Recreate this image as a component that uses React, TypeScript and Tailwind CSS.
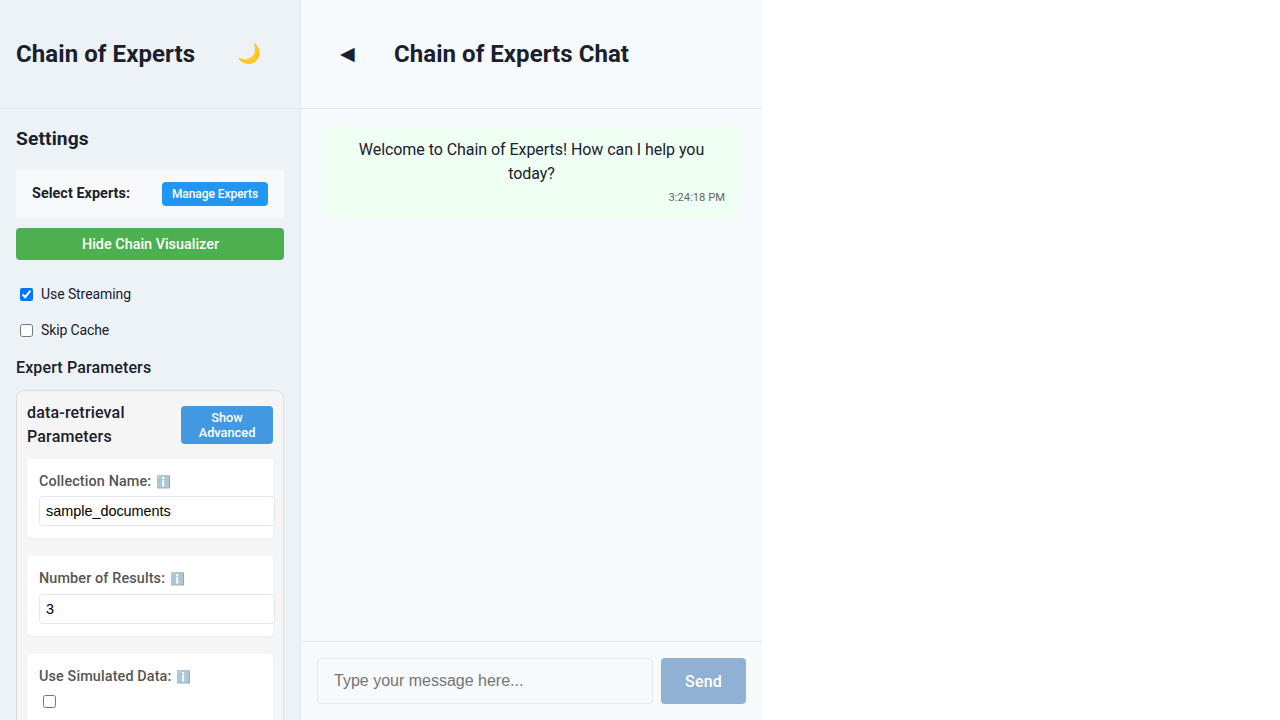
import { useState } from "react";

type FieldProps = { label: string; value?: string; type?: "text" | "number" | "checkbox" };

function ParameterField({ label, value, type = "text" }: FieldProps) {
  return (
    <div className="mb-[18.05px] rounded bg-white px-3 pb-3 pt-3 shadow-[0_1px_2px_rgba(0,0,0,0.05)]">
      <label className="mb-[3.4px] block h-[22px] text-[14.4px] font-medium leading-[22px] tracking-[0.12px] text-[#555]">
        {label}: <span className="ml-[1px] text-[12px] tracking-normal opacity-70">ℹ️</span>
      </label>
      {type === "checkbox" ? (
        <input type="checkbox" className="mb-3 ml-1 mt-[7.6px] block size-[13px]" />
      ) : (
        <input
          type={type}
          defaultValue={value}
          className="block h-[30px] w-[236px] rounded border border-[#e2e8f0] bg-white px-1.5 font-['Liberation_Sans',sans-serif] text-[14.4px] text-black"
        />
      )}
    </div>
  );
}

export default function App() {
  const [message, setMessage] = useState("");

  return (
    <div className="flex h-[720px] w-[762px] overflow-hidden bg-[#f7fafc] font-[Roboto,sans-serif] text-base leading-6 text-[#1a202c]">
      <aside className="flex w-[301px] shrink-0 flex-col overflow-hidden border-r border-[#e2e8f0] bg-[#edf2f7]">
        <header className="flex h-[109px] shrink-0 items-center justify-between border-b border-[#e2e8f0] pl-4 pr-[39px]">
          <h1 className="text-2xl font-bold leading-9 tracking-[0.08px]">Chain of Experts</h1>
          <button className="text-[19.2px] leading-6">🌙</button>
        </header>
        <div className="flex min-h-0 flex-1 flex-col px-4 pt-4">
          <h2 className="text-[19.2px] font-bold leading-7 tracking-[0.12px]">Settings</h2>
          <div className="mt-[17px] flex h-12 shrink-0 items-center justify-between bg-[#f8f9fa] px-4">
            <span className="text-[14.4px] font-bold tracking-[0.04px]">Select Experts:</span>
            <button className="h-6 w-[106px] whitespace-nowrap rounded bg-[#2196f3] text-center text-xs font-medium leading-6 tracking-[-0.06px] text-white">
              Manage Experts
            </button>
          </div>
          <button className="mt-2.5 h-8 shrink-0 rounded bg-[#4caf50] pl-px pt-0.5 text-[14.4px] font-medium text-white">
            Hide Chain Visualizer
          </button>
          <label className="mt-[22px] flex h-6 shrink-0 items-center text-sm tracking-[-0.08px]">
            <input type="checkbox" defaultChecked className="ml-1 mr-2 size-[13px]" />
            Use Streaming
          </label>
          <label className="mt-3 flex h-6 shrink-0 items-center text-sm tracking-[-0.12px]">
            <input type="checkbox" className="ml-1 mr-2 size-[13px]" />
            Skip Cache
          </label>
          <h3 className="mt-3.5 font-medium tracking-[0.13px]">Expert Parameters</h3>
          <section className="mt-2.5 h-[560px] shrink-0 rounded-lg border border-[#ddd] bg-[#f5f5f5] p-2.5">
            <div className="mb-2.5 flex items-center justify-between">
              <h4 className="w-[110px] font-medium tracking-[0.18px]">data-retrieval Parameters</h4>
              <button className="h-[38px] w-[92px] rounded bg-[#4299e1] px-3 text-[12.8px] font-medium leading-[15px] text-white">
                Show Advanced
              </button>
            </div>
            <ParameterField label="Collection Name" value="sample_documents" />
            <ParameterField label="Number of Results" value="3" type="number" />
            <ParameterField label="Use Simulated Data" type="checkbox" />
          </section>
        </div>
      </aside>
      <main className="flex min-w-0 flex-1 flex-col">
        <header className="flex h-[109px] shrink-0 items-center border-b border-[#e2e8f0] pl-[39px]">
          <button className="w-[54px] text-left text-[19.2px] leading-6">◀</button>
          <h1 className="text-2xl font-bold leading-9 tracking-[0.05px]">Chain of Experts Chat</h1>
        </header>
        <div className="flex-1 px-[21px] pt-4">
          <article className="h-[94px] rounded-lg bg-[#f0fff4] px-4 pt-[13px]">
            <p className="text-center tracking-[-0.055px]">Welcome to Chain of Experts! How can I help you today?</p>
            <time className="block text-right text-[11.2px] text-[#666]">3:24:18 PM</time>
          </article>
        </div>
        <footer className="flex h-[79px] shrink-0 gap-2 border-t border-[#e2e8f0] p-4">
          <input
            value={message}
            onChange={(event) => setMessage(event.target.value)}
            placeholder="Type your message here..."
            className="h-[46px] min-w-0 flex-1 rounded border border-[#e2e8f0] bg-[#f7fafc] px-4 font-['Liberation_Sans',sans-serif] text-base placeholder:text-[#757575]"
          />
          <button className="h-[46px] w-[85px] rounded bg-[#90b0d4] pt-0.5 font-medium tracking-[0.15px] text-white">Send</button>
        </footer>
      </main>
    </div>
  );
}
